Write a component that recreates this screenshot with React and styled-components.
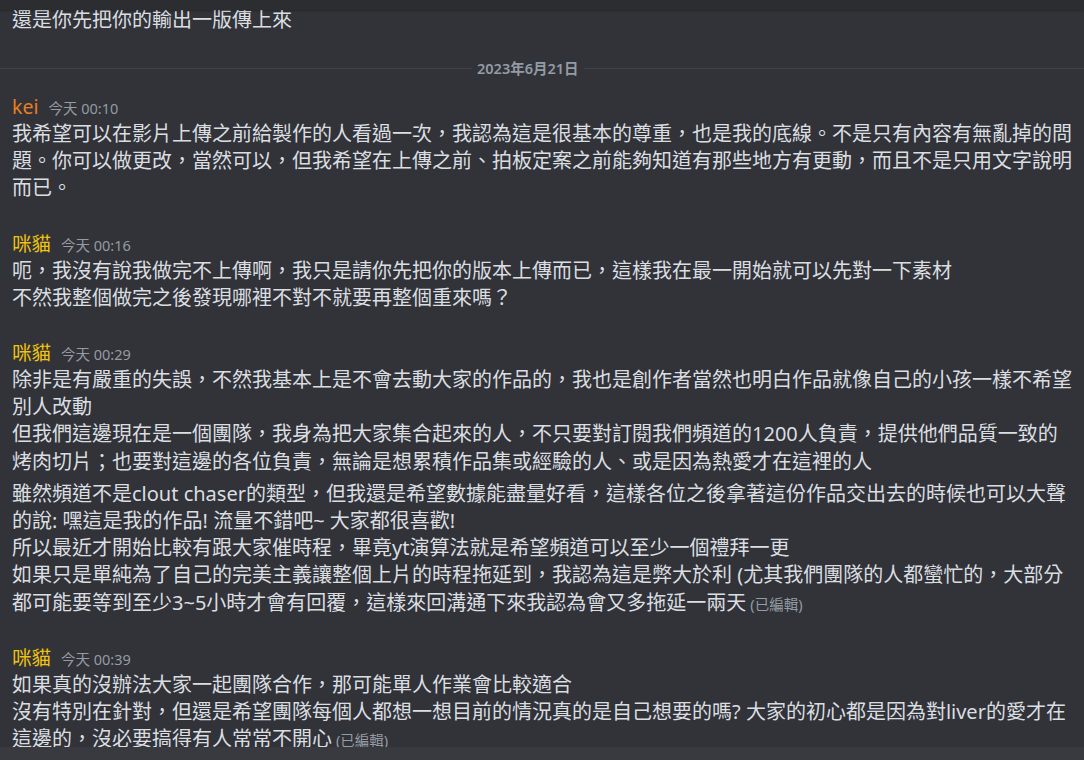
import React from "react";
import styled, { createGlobalStyle } from "styled-components";

const Global = createGlobalStyle`
  html, body { margin: 0; padding: 0; background: #313338; }
  body { font-family: "Noto Sans", "Noto Sans CJK TC", sans-serif; }
  * { box-sizing: border-box; }
`;

const Page = styled.div`
  width: 1084px;
  height: 760px;
  display: flex;
  flex-direction: column;
  background: #313338;
  overflow: hidden;
  color: #dbdee1;
  font-family: "Noto Sans", "Noto Sans CJK TC", sans-serif;
`;

const TopBar = styled.div`
  flex: 0 0 10px;
  background: #2b2d31;
  box-shadow: 0 1px 2px rgba(0, 0, 0, 0.25);
  position: relative;
  z-index: 2;
`;

const Scroller = styled.div`
  flex: 1 1 auto;
  overflow: hidden;
  position: relative;
`;

const List = styled.div`
  display: flex;
  flex-direction: column;
`;

const Composer = styled.div`
  flex: 0 0 13px;
  background: #383a40;
`;

const Group = styled.div`
  padding: 0 4px 0 12px;
  margin-top: ${(p) => p.$gap}px;
`;

const Header = styled.div`
  display: flex;
  align-items: baseline;
  height: 26px;
  line-height: 26px;
`;

const Name = styled.span`
  font-size: 19.5px;
  font-weight: 400;
  color: ${(p) => p.$color};
`;

const Time = styled.span`
  margin-left: 10px;
  font-size: 14.5px;
  color: #949ba4;
`;

const Message = styled.div`
  font-size: 20px;
  line-height: ${(p) => (p.$compact ? "20px" : "27.2px")};
  & + & {
    margin-top: 5px;
  }
`;

const Line = styled.span`
  display: block;
  white-space: nowrap;
`;

const Edited = styled.span`
  margin-left: 4px;
  font-size: 14.5px;
  line-height: 1;
  color: #949ba4;
`;

const Divider = styled.div`
  display: flex;
  align-items: center;
  height: 16px;
  margin: 30px 0 18px;
`;

const Rule = styled.div`
  height: 1px;
  background: #3f4147;
  flex: ${(p) => (p.$fixed ? `0 0 ${p.$fixed}px` : "1 1 auto")};
`;

const DateLabel = styled.span`
  padding: 0 5px;
  font-size: 14.5px;
  font-weight: 600;
  line-height: 16px;
  color: #949ba4;
`;

const YELLOW = "#f1c40f";

const groups = [
  {
    name: "kei",
    color: "#e67e22",
    time: "今天 00:10",
    messages: [
      {
        lines: [
          "我希望可以在影片上傳之前給製作的人看過一次，我認為這是很基本的尊重，也是我的底線。不是只有內容有無亂掉的問",
          "題。你可以做更改，當然可以，但我希望在上傳之前、拍板定案之前能夠知道有那些地方有更動，而且不是只用文字說明",
          "而已。",
        ],
      },
    ],
  },
  {
    name: "咪貓",
    color: YELLOW,
    time: "今天 00:16",
    messages: [
      {
        lines: [
          "呃，我沒有說我做完不上傳啊，我只是請你先把你的版本上傳而已，這樣我在最一開始就可以先對一下素材",
          "不然我整個做完之後發現哪裡不對不就要再整個重來嗎？",
        ],
      },
    ],
  },
  {
    name: "咪貓",
    color: YELLOW,
    time: "今天 00:29",
    messages: [
      {
        lines: [
          "除非是有嚴重的失誤，不然我基本上是不會去動大家的作品的，我也是創作者當然也明白作品就像自己的小孩一樣不希望",
          "別人改動",
          "但我們這邊現在是一個團隊，我身為把大家集合起來的人，不只要對訂閱我們頻道的1200人負責，提供他們品質一致的",
          "烤肉切片；也要對這邊的各位負責，無論是想累積作品集或經驗的人、或是因為熱愛才在這裡的人",
        ],
      },
      {
        lines: [
          "雖然頻道不是clout chaser的類型，但我還是希望數據能盡量好看，這樣各位之後拿著這份作品交出去的時候也可以大聲",
          "的說: 嘿這是我的作品! 流量不錯吧~ 大家都很喜歡!",
          "所以最近才開始比較有跟大家催時程，畢竟yt演算法就是希望頻道可以至少一個禮拜一更",
          "如果只是單純為了自己的完美主義讓整個上片的時程拖延到，我認為這是弊大於利 (尤其我們團隊的人都蠻忙的，大部分",
          "都可能要等到至少3~5小時才會有回覆，這樣來回溝通下來我認為會又多拖延一兩天",
        ],
        edited: true,
      },
    ],
  },
  {
    name: "咪貓",
    color: YELLOW,
    time: "今天 00:39",
    messages: [
      {
        lines: [
          "如果真的沒辦法大家一起團隊合作，那可能單人作業會比較適合",
          "沒有特別在針對，但還是希望團隊每個人都想一想目前的情況真的是自己想要的嗎? 大家的初心都是因為對liver的愛才在",
          "這邊的，沒必要搞得有人常常不開心",
        ],
        edited: true,
      },
    ],
  },
];

function MessageBody({ lines, edited, compact }) {
  return (
    <Message $compact={compact}>
      {lines.map((l, i) => (
        <Line key={i}>
          {l}
          {edited && i === lines.length - 1 && <Edited>(已編輯)</Edited>}
        </Line>
      ))}
    </Message>
  );
}

export default function App() {
  return (
    <>
      <Global />
      <Page>
        <TopBar />
        <Scroller>
          <List>
            <Group $gap={0}>
              <MessageBody compact lines={["還是你先把你的輸出一版傳上來"]} />
            </Group>
            <Divider>
              <Rule $fixed={472} />
              <DateLabel>2023年6月21日</DateLabel>
              <Rule />
            </Divider>
            {groups.map((g, i) => (
              <Group key={i} $gap={i === 0 ? 0 : 29}>
                <Header>
                  <Name $color={g.color}>{g.name}</Name>
                  <Time>{g.time}</Time>
                </Header>
                {g.messages.map((m, j) => (
                  <MessageBody key={j} lines={m.lines} edited={m.edited} />
                ))}
              </Group>
            ))}
          </List>
        </Scroller>
        <Composer />
      </Page>
    </>
  );
}
